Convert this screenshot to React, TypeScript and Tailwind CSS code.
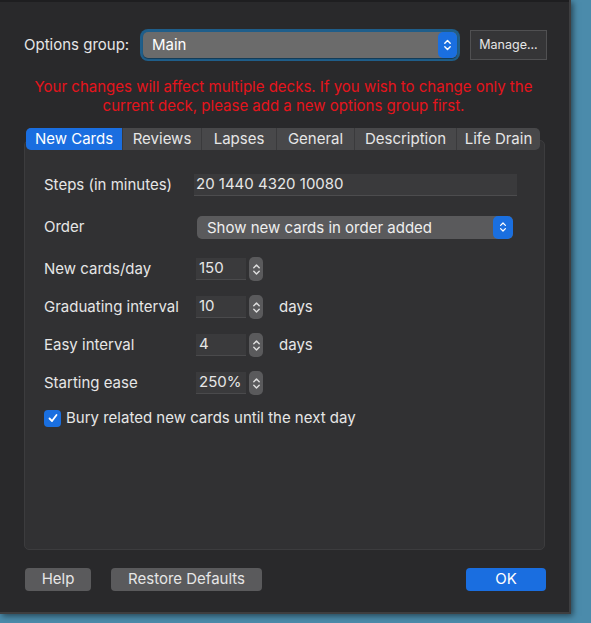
import React from "react";

const Chevrons = ({ className = "" }: { className?: string }) => (
  <svg viewBox="0 0 10 16" className={className} fill="none" stroke="white" strokeWidth="1.6" strokeLinecap="round" strokeLinejoin="round">
    <path d="M2 6 L5 3 L8 6" />
    <path d="M2 10 L5 13 L8 10" />
  </svg>
);

const Spin = ({ value, suffix }: { value: string; suffix?: string }) => (
  <div className="flex items-center h-[22px]">
    <div className="w-[50px] h-[22px] bg-[#3a3a3c] border-b border-[#4a4a4c] pl-[3px] flex items-center text-[15px] text-[#e6e6e6]">{value}</div>
    <div className="ml-[3px] w-[14px] h-[24px] rounded-[5px] bg-[#5a5a5c] flex items-center justify-center">
      <Chevrons className="w-[9px] h-[15px] opacity-80" />
    </div>
    {suffix && <span className="ml-[16px] text-[15px] text-[#e6e6e6]">{suffix}</span>}
  </div>
);

const Row = ({ label, children, h = "h-[38px]" }: { label: string; children: React.ReactNode; h?: string }) => (
  <div className={`flex items-center ${h}`}>
    <div className="w-[150px] shrink-0 text-[15px] text-[#e6e6e6]">{label}</div>
    {children}
  </div>
);

export default function App() {
  const tabs = ["New Cards", "Reviews", "Lapses", "General", "Description", "Life Drain"];
  const widths = ["w-[96px]", "w-[79px]", "w-[75px]", "w-[78px]", "w-[102px]", "w-[84px]"];
  return (
    <div className="w-[591px] h-[623px] bg-[#4b8bab] relative overflow-hidden" style={{ fontFamily: "Inter, 'Noto Sans', sans-serif" }}>
      <div className="w-[571px] h-[614px] bg-[#29292b] border-r-[2px] border-b-[2px] border-[#3e3e40] shadow-[2px_2px_6px_rgba(0,0,0,0.5)] flex flex-col">
        <div className="h-[2px] bg-[#1e1e20]" />
        {/* Options group row */}
        <div className="flex items-center mt-[27px] pl-[24px]">
          <span className="text-[15px] text-[#e6e6e6] w-[116px]">Options group:</span>
          <div className="w-[320px] h-[32px] rounded-[8px] bg-[#1f5e8a] p-[3px] flex">
            <div className="flex-1 flex rounded-[5px] bg-[#6b6b6b] overflow-hidden shadow-[0_1px_1px_rgba(0,0,0,0.4)]">
              <span className="flex-1 pl-[9px] text-[15px] text-white leading-[26px]">Main</span>
              <div className="w-[19px] bg-[#1a6fe0] flex items-center justify-center rounded-[5px]">
                <Chevrons className="w-[9px] h-[16px]" />
              </div>
            </div>
          </div>
          <div className="ml-[10px] w-[77px] h-[30px] bg-[#353537] border border-[#505052] flex items-center justify-center text-[12.5px] text-[#e6e6e6]">Manage...</div>
        </div>
        {/* Warning */}
        <div className="mt-[16px] text-center text-[15px] leading-[19px] text-[#e5141c] pr-[2px]">
          <div>Your changes will affect multiple decks. If you wish to change only the</div>
          <div>current deck, please add a new options group first.</div>
        </div>
        {/* Tabs panel */}
        <div className="relative mt-[13px] mx-[24px] h-[422px]">
          <div className="absolute left-0 right-0 top-[12px] bottom-0 rounded-[5px] bg-[#313133] border border-[#3c3c3e]" />
          <div className="relative flex ml-[2px] h-[22px] rounded-[5px] overflow-hidden w-[514px] bg-[#48484a]">
            {tabs.map((t, i) => (
              <div key={t} className={`${widths[i]} flex items-center justify-center text-[15px] ${i === 0 ? "bg-[#1a6ee0] text-white" : "text-[#e6e6e6] border-l border-[#3a3a3c]"}`}>{t}</div>
            ))}
          </div>
          <div className="relative pl-[20px] pt-[23px]">
            <Row label="Steps (in minutes)" h="h-[24px]">
              <div className="w-[323px] h-[22px] bg-[#3a3a3c] border-b border-[#4c4c4e] pl-[2px] flex items-center text-[15px] text-[#e6e6e6]">20 1440 4320 10080</div>
            </Row>
            <div className="h-[18px]" />
            <Row label="Order" h="h-[24px]">
              <div className="ml-[3px] w-[316px] h-[23px] rounded-[5px] bg-[#5a5a5c] flex overflow-hidden">
                <span className="flex-1 pl-[10px] text-[15px] text-[#eeeeee] leading-[23px]">Show new cards in order added</span>
                <div className="w-[20px] bg-[#1a6fe0] flex items-center justify-center rounded-[5px]">
                  <Chevrons className="w-[8px] h-[14px]" />
                </div>
              </div>
            </Row>
            <div className="h-[11px]" />
            <Row label="New cards/day"><div className="ml-[2px]"><Spin value="150" /></div></Row>
            <Row label="Graduating interval"><div className="ml-[2px]"><Spin value="10" suffix="days" /></div></Row>
            <Row label="Easy interval"><div className="ml-[2px]"><Spin value="4" suffix="days" /></div></Row>
            <Row label="Starting ease"><div className="ml-[2px]"><Spin value="250%" /></div></Row>
            <div className="flex items-center h-[32px]">
              <div className="w-[17px] h-[17px] rounded-[4px] bg-[#1a6fe0] flex items-center justify-center">
                <svg viewBox="0 0 12 12" className="w-[12px] h-[12px]" fill="none" stroke="white" strokeWidth="1.8" strokeLinecap="round" strokeLinejoin="round"><path d="M2.5 6.5 L5 9 L9.5 3" /></svg>
              </div>
              <span className="ml-[5px] text-[15px] text-[#e6e6e6]">Bury related new cards until the next day</span>
            </div>
          </div>
        </div>
        {/* Bottom buttons */}
        <div className="flex items-center mt-[18px] pl-[25px] pr-[23px]">
          <div className="w-[66px] h-[23px] rounded-[4px] bg-[#5a5a5c] flex items-center justify-center text-[15px] text-[#e6e6e6]">Help</div>
          <div className="ml-[20px] w-[151px] h-[23px] rounded-[4px] bg-[#5a5a5c] flex items-center justify-center text-[15px] text-[#e6e6e6]">Restore Defaults</div>
          <div className="ml-auto w-[80px] h-[23px] rounded-[4px] bg-[#1a6ee0] flex items-center justify-center text-[15px] text-white">OK</div>
        </div>
      </div>
    </div>
  );
}
